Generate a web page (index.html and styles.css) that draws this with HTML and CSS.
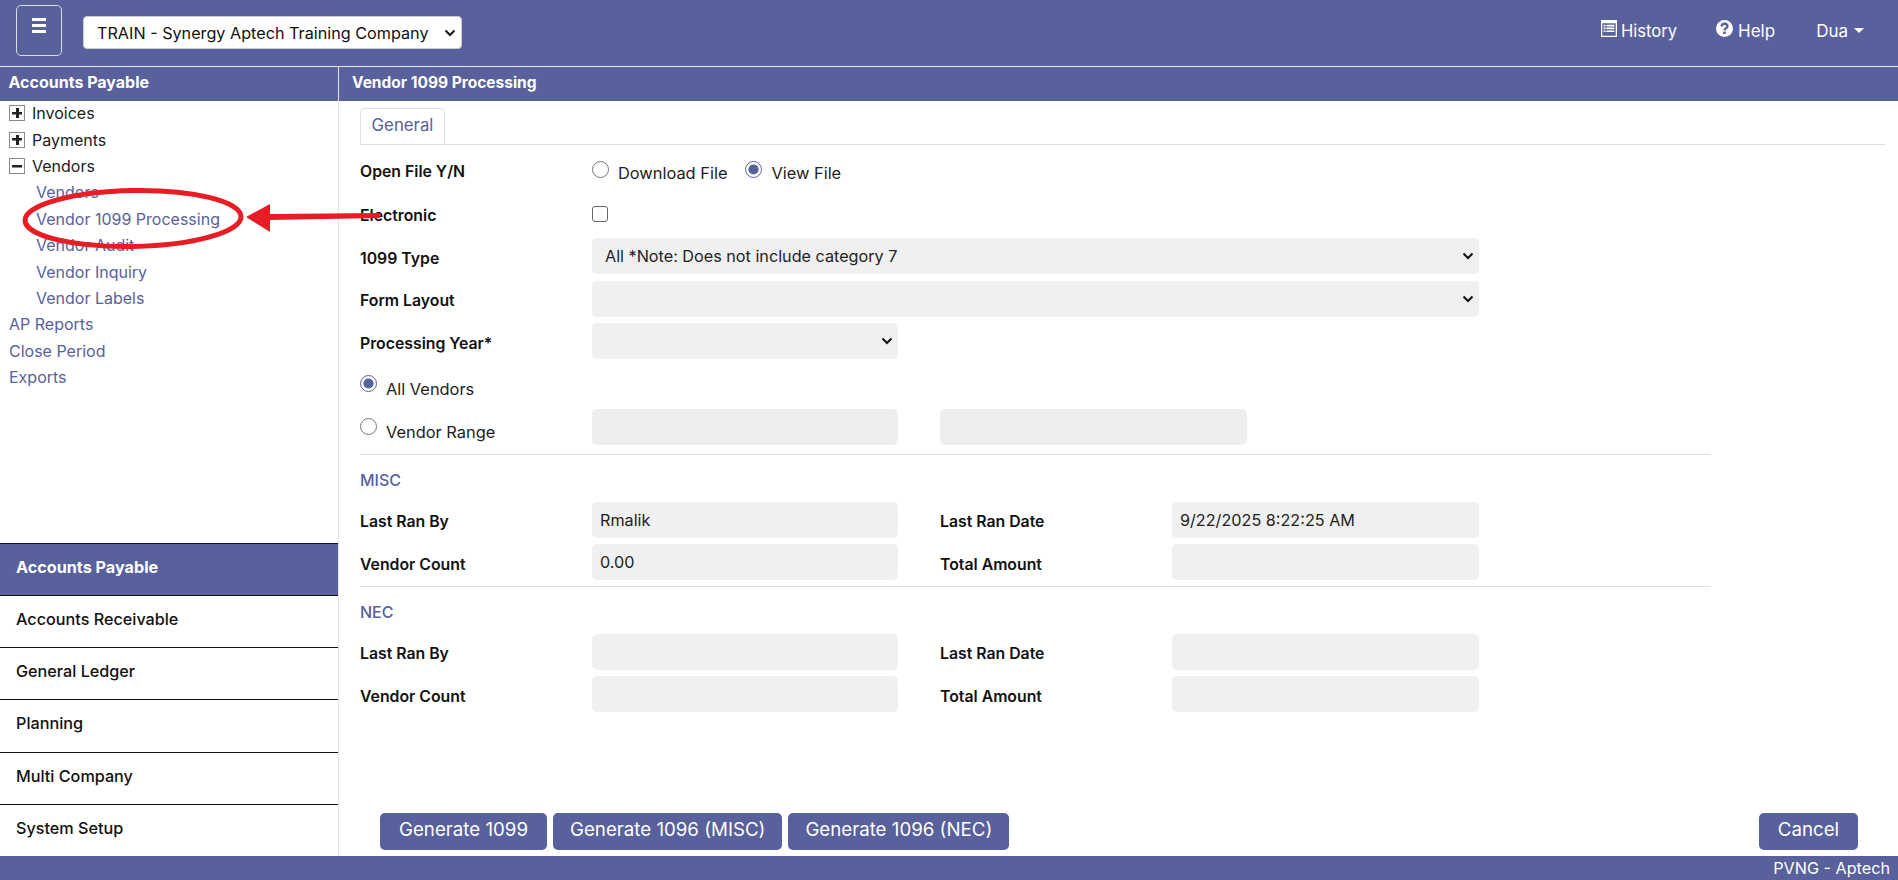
FILE: index.html
```html
<!DOCTYPE html>
<html lang="en">
<head>
<meta charset="utf-8">
<title>Vendor 1099 Processing</title>
<link rel="stylesheet" href="styles.css">
</head>
<body>
<div class="page">
  <header class="topbar">
    <button class="burger" type="button" aria-label="Menu">
      <span></span><span></span><span></span>
    </button>
    <select class="company chev"><option>TRAIN - Synergy Aptech Training Company</option></select>
    <nav class="topnav">
      <a class="toplink">
        <svg class="ico" viewBox="0 0 16 17" width="16" height="17"><path fill="#fff" fill-rule="evenodd" d="M0 0h16v17H0zM1.3 3.2v12.5h13.4V3.2z"/><path fill="#fff" d="M2.6 4.8h2v1.6h-2zM5.4 4.8h8v1.6h-8zM2.6 7.6h2v1.6h-2zM5.4 7.6h8v1.6h-8zM2.6 10.4h2V12h-2zM5.4 10.4h8V12h-8z"/></svg>
        History
      </a>
      <a class="toplink help">
        <svg class="ico" viewBox="0 0 17 17" width="17" height="17"><circle cx="8.5" cy="8.5" r="8.5" fill="#fff"/><path fill="none" stroke="#58619b" stroke-width="2.4" d="M5.6 6.5c0-1.7 1.2-2.7 2.9-2.7s2.9 1 2.9 2.4c0 2.2-2.9 2.1-2.9 4.2"/><rect x="7.2" y="11.6" width="2.6" height="2.4" fill="#58619b"/></svg>
        Help
      </a>
      <a class="toplink user">Dua<span class="caret"></span></a>
    </nav>
  </header>

  <div class="body">
    <aside class="sidebar">
      <h2 class="bar">Accounts Payable</h2>
      <ul class="tree">
        <li class="node"><span class="box plus"></span>Invoices</li>
        <li class="node"><span class="box plus"></span>Payments</li>
        <li class="node"><span class="box"></span>Vendors</li>
        <li class="leaf sub">Vendors</li>
        <li class="leaf sub">Vendor 1099 Processing</li>
        <li class="leaf sub">Vendor Audit</li>
        <li class="leaf sub">Vendor Inquiry</li>
        <li class="leaf sub">Vendor Labels</li>
        <li class="leaf">AP Reports</li>
        <li class="leaf">Close Period</li>
        <li class="leaf">Exports</li>
      </ul>
      <ul class="modules">
        <li class="module active">Accounts Payable</li>
        <li class="module">Accounts Receivable</li>
        <li class="module">General Ledger</li>
        <li class="module">Planning</li>
        <li class="module">Multi Company</li>
        <li class="module">System Setup</li>
      </ul>
    </aside>

    <main class="main">
      <h2 class="bar">Vendor 1099 Processing</h2>
      <div class="tabs"><span class="tab">General</span></div>
      <form class="form">
        <div class="row">
          <label class="lbl up">Open File Y/N</label>
          <div class="choices">
            <label class="choice"><input type="radio" name="open">Download File</label>
            <label class="choice"><input type="radio" name="open" checked>View File</label>
          </div>
        </div>
        <div class="row">
          <label class="lbl">Electronic</label>
          <input class="check" type="checkbox">
        </div>
        <div class="row">
          <label class="lbl">1099 Type</label>
          <select class="field wide chev"><option>All *Note: Does not include category 7</option></select>
        </div>
        <div class="row">
          <label class="lbl">Form Layout</label>
          <select class="field wide chev"><option></option></select>
        </div>
        <div class="row">
          <label class="lbl">Processing Year*</label>
          <select class="field chev"><option></option></select>
        </div>
        <div class="row tall">
          <label class="choice low"><input type="radio" name="range" checked>All Vendors</label>
        </div>
        <div class="row">
          <label class="choice low"><input type="radio" name="range">Vendor Range</label>
          <input class="field dim">
          <input class="field dim second">
        </div>
        <hr class="rule">
        <h3 class="section">MISC</h3>
        <div class="row four">
          <label class="lbl">Last Ran By</label>
          <input class="field" value="Rmalik">
          <label class="lbl">Last Ran Date</label>
          <input class="field" value="9/22/2025 8:22:25 AM">
        </div>
        <div class="row four">
          <label class="lbl">Vendor Count</label>
          <input class="field" value="0.00">
          <label class="lbl">Total Amount</label>
          <input class="field">
        </div>
        <hr class="rule tight">
        <h3 class="section">NEC</h3>
        <div class="row four">
          <label class="lbl">Last Ran By</label>
          <input class="field">
          <label class="lbl">Last Ran Date</label>
          <input class="field">
        </div>
        <div class="row four">
          <label class="lbl">Vendor Count</label>
          <input class="field">
          <label class="lbl">Total Amount</label>
          <input class="field">
        </div>
      </form>
      <div class="actions">
        <div class="group">
          <button class="btn first" type="button">Generate 1099</button>
          <button class="btn" type="button">Generate 1096 (MISC)</button>
          <button class="btn" type="button">Generate 1096 (NEC)</button>
        </div>
        <button class="btn cancel" type="button">Cancel</button>
      </div>
    </main>
  </div>

  <footer class="footer">PVNG - Aptech</footer>

  <svg class="callout" viewBox="0 0 400 70" width="400" height="70" aria-hidden="true">
    <ellipse cx="133" cy="34.5" rx="108" ry="28" fill="none" stroke="#e71c24" stroke-width="5" transform="rotate(-1 133 34.5)"/>
    <path fill="#e71c24" d="M246 33 270 20v10l110-1v5l-110 2v12z"/>
  </svg>
</div>
</body>
</html>
```
FILE: styles.css
```css
* { box-sizing: border-box; }
html, body { margin: 0; padding: 0; height: 100%; overflow: hidden; }
body {
  font-family: Inter, "Open Sans", "Liberation Sans", sans-serif;
  font-size: 16px;
  color: #111;
  background: #fff;
}
.page {
  position: relative;
  display: flex;
  flex-direction: column;
  width: 1898px;
  height: 880px;
}

/* Native-looking chevron for every drop-down */
.chev {
  appearance: none;
  background-image: url("data:image/svg+xml,%3Csvg xmlns='http://www.w3.org/2000/svg' viewBox='0 0 12 8'%3E%3Cpath d='M1.5 1.5 6 6l4.5-4.5' fill='none' stroke='%23111' stroke-width='2'/%3E%3C/svg%3E");
  background-repeat: no-repeat;
  background-position: right 5px center;
  background-size: 12px 8px;
}

/* Top bar */
.topbar {
  flex: 0 0 67px;
  display: flex;
  align-items: flex-start;
  background: #58619b;
  border-bottom: 1px solid #e6e7f0;
  padding: 5px 34px 0 16px;
}
.burger {
  width: 46px;
  height: 51px;
  display: flex;
  flex-direction: column;
  justify-content: center;
  align-items: center;
  gap: 3px;
  padding: 0 0 10px;
  background: transparent;
  border: 1px solid #d9dbe9;
  border-radius: 5px;
}
.burger span { width: 14px; height: 3px; background: #fff; }
.company {
  width: 379px;
  height: 33px;
  margin: 11px 0 0 21px;
  padding: 0 8px 0 13px;
  font: inherit;
  font-size: 16.2px;
  color: #111;
  background-color: #fff;
  border: 1px solid #ccc;
  border-radius: 4px;
}
.topnav {
  margin-left: auto;
  display: flex;
  align-items: center;
  height: 42px;
  padding-top: 9px;
  color: #fff;
}
.toplink {
  display: flex;
  align-items: center;
  gap: 4px;
  font-size: 16.6px;
  color: #fff;
}
.ico { margin-top: -5px; }
.help { margin-left: 39px; gap: 5px; font-size: 17px; }
.user { margin-left: 41px; gap: 6px; font-size: 17px; }
.caret {
  width: 0;
  height: 0;
  border: 5px solid transparent;
  border-top-color: #fff;
  border-bottom: 0;
}

/* Frame */
.body { flex: 1; display: flex; min-height: 0; }
.sidebar {
  flex: 0 0 339px;
  display: flex;
  flex-direction: column;
  border-right: 1px solid #e2e3e8;
}
.bar {
  flex: 0 0 34px;
  margin: 0;
  padding: 0 0 0 8.5px;
  font-size: 16px;
  font-weight: 700;
  line-height: 31px;
  color: #fff;
  background: #58619b;
}
.main .bar { padding-left: 13px; margin-left: -1px; border-left: 1px solid #e6e7f0; font-size: 15.5px; }

/* Tree */
.tree { flex: 1; list-style: none; margin: -1px 0 0; padding: 0 0 0 9px; }
.node, .leaf { display: flex; align-items: center; height: 26.4px; }
.node { color: #222; }
.leaf { color: #58619b; }
.sub { padding-left: 27px; }
.box {
  position: relative;
  flex: 0 0 16px;
  width: 16px;
  height: 16px;
  margin-right: 7px;
  border: 1px solid #8a8a8a;
  background:
    linear-gradient(#222, #222) center / 10px 2.5px no-repeat;
}
.box.plus::after {
  content: "";
  position: absolute;
  left: 5.5px;
  top: 2px;
  width: 3px;
  height: 10px;
  background: #222;
}

/* Modules */
.modules { flex: 0 0 auto; list-style: none; margin: 0; padding: 0; }
.module {
  height: 52.2px;
  padding-left: 16px;
  border-top: 1.5px solid #111;
  font-size: 16.2px;
  font-weight: 500;
  line-height: 46px;
  color: #111;
}
.module.active { background: #58619b; color: #fff; font-weight: 700; }

/* Main */
.main { flex: 1; display: flex; flex-direction: column; min-width: 0; }
.tabs {
  flex: 0 0 42px;
  margin: 0 13px 0 21px;
  padding-top: 7px;
  border-bottom: 1px solid #dedfe3;
}
.tab {
  display: block;
  width: 85px;
  height: 36px;
  font-size: 16.8px;
  line-height: 33px;
  text-align: center;
  color: #58619b;
  background: #fff;
  border: 1px solid #dedfe3;
  border-bottom: 1px solid #fff;
  border-radius: 5px 5px 0 0;
}
.form { flex: 1; padding: 5px 0 0 21px; }
.row {
  display: grid;
  grid-template-columns: 232px 306px 42px 232px 307px;
  align-items: center;
  height: 42.5px;
}
.row.tall { height: 43.5px; }
.lbl { grid-column: 1; padding-top: 3.5px; font-weight: 600; color: #111; font-size: 15.8px; }
.lbl.up { padding: 0; }
.choices { display: flex; gap: 18px; padding-top: 4px; }
.choice { display: flex; align-items: center; gap: 9px; color: #222; font-size: 16.4px; }
.choice input {
  width: 17px;
  height: 17px;
  margin: -8px 0 0;
  accent-color: #58619b;
}
.low { padding-top: 10px; }
.low input { margin-top: -12px; }
.check {
  appearance: none;
  width: 16px;
  height: 16px;
  margin: 0;
  background: #fff;
  border: 1.5px solid #666;
  border-radius: 3px;
}
.field {
  grid-column: 2;
  width: 100%;
  height: 36px;
  padding: 0 8px;
  font: inherit;
  font-size: 16.2px;
  color: #222;
  background-color: #f0f0f0;
  border: 0;
  border-radius: 5px;
}
select.field { padding-left: 13px; }
.wide { grid-column: 2 / span 4; width: 887px; }
.second { grid-column: 4 / span 2; width: 307px; }
.dim { background-color: #eeeeee; }
.four .lbl:nth-child(3) { grid-column: 4; }
.four .field:nth-child(4) { grid-column: 5; }
.rule {
  width: 1351px;
  height: 1px;
  margin: 5px 0 0;
  background: #d9e0e8;
  border: 0;
}
.rule.tight { margin-top: 2px; }
.section {
  margin: 0;
  height: 44px;
  font-size: 16px;
  font-weight: 500;
  line-height: 50px;
  color: #58619b;
}

/* Actions */
.actions {
  flex: 0 0 auto;
  display: flex;
  justify-content: space-between;
  padding: 0 40px 6px 41px;
}
.group { display: flex; gap: 6px; }
.btn {
  height: 37px;
  padding: 0 17px 5px;
  font: inherit;
  font-size: 18.7px;
  color: #fff;
  background: #58619b;
  border: 0;
  border-radius: 5px;
}
.first { width: 167px; }
.cancel { width: 99px; padding: 0 0 5px; }

/* Footer */
.footer {
  flex: 0 0 24px;
  padding-right: 8px;
  font-size: 16.2px;
  line-height: 24px;
  text-align: right;
  color: #fff;
  background: #58619b;
}

/* Red annotation lying over the page */
.callout { position: absolute; left: 0; top: 184px; pointer-events: none; }
```
